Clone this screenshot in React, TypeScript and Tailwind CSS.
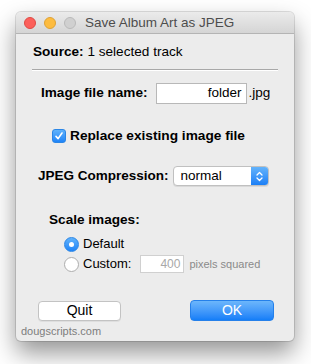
import React from "react";

const font = { fontFamily: '"Liberation Sans", Arial, sans-serif' };

export default function App() {
  return (
    <div className="w-[311px] h-[364px] bg-white pl-[16px] pt-[12px]" style={font}>
      <div className="w-[278px] h-[329px] bg-[#ececec] rounded-[5px] shadow-[0_12px_24px_rgba(0,0,0,0.42),0_0_0_1px_rgba(0,0,0,0.12)] flex flex-col overflow-hidden">
        {/* Title bar */}
        <div className="h-[22px] shrink-0 flex items-center bg-gradient-to-b from-[#ebebeb] to-[#d5d5d5] border-b border-[#b4b4b4] pl-[8px]">
          <div className="w-[12px] h-[12px] rounded-full bg-[#fc605b] border border-[#de4a44]" />
          <div className="w-[12px] h-[12px] rounded-full bg-[#fdbc40] border border-[#dea236] ml-[8px]" />
          <div className="w-[12px] h-[12px] rounded-full bg-[#d0d0d0] border border-[#b9b9b9] ml-[8px]" />
          <div className="ml-[9px] text-[13.5px] text-[#4d4d4d] leading-none">Save Album Art as JPEG</div>
        </div>

        {/* Source */}
        <div className="mt-[10px] pl-[17px] text-[13.6px] leading-[16px] text-black">
          <span className="font-bold">Source:</span> 1 selected track
        </div>

        {/* Separator */}
        <div className="mx-[16px] mt-[9px] h-[1px] bg-[#a8a8a8]" />
        <div className="mx-[16px] h-[1px] bg-white" />

        {/* Image file name */}
        <div className="mt-[12px] pl-[25px] flex items-center h-[21px]">
          <span className="font-bold text-[13.6px] text-black">Image file name:</span>
          <div className="ml-[8px] w-[91px] h-[21px] bg-white border border-[#b8b8b8] flex items-center justify-end pr-[4px] text-[13.5px] text-black">
            folder
          </div>
          <span className="ml-[2px] text-[13.5px] text-black">.jpg</span>
        </div>

        {/* Checkbox */}
        <div className="mt-[24px] pl-[36px] flex items-center h-[16px]">
          <div className="w-[14px] h-[14px] rounded-[3px] bg-gradient-to-b from-[#5fb2fb] to-[#1d84f8] border border-[#2b86e6] flex items-center justify-center">
            <svg width="10" height="10" viewBox="0 0 10 10">
              <path d="M2 5.4 L4.1 7.6 L8 2" fill="none" stroke="white" strokeWidth="1.6" strokeLinecap="round" strokeLinejoin="round" />
            </svg>
          </div>
          <span className="ml-[4px] font-bold text-[13.7px] text-black">Replace existing image file</span>
        </div>

        {/* Compression */}
        <div className="mt-[22px] pl-[22px] flex items-center h-[20px]">
          <span className="font-bold text-[13.5px] text-black">JPEG Compression:</span>
          <div className="ml-[4px] w-[96px] h-[20px] bg-white border border-[#c0c0c0] rounded-[4px] flex items-center overflow-hidden shadow-[0_1px_0_rgba(0,0,0,0.08)]">
            <span className="flex-1 pl-[7px] text-[13.5px] text-black">normal</span>
            <div className="w-[17px] h-full bg-gradient-to-b from-[#63b3fb] to-[#1a7ff6] flex items-center justify-center">
              <svg width="9" height="13" viewBox="0 0 9 13">
                <path d="M2 5 L4.5 2.5 L7 5" fill="none" stroke="white" strokeWidth="1.3" strokeLinecap="round" strokeLinejoin="round" />
                <path d="M2 8 L4.5 10.5 L7 8" fill="none" stroke="white" strokeWidth="1.3" strokeLinecap="round" strokeLinejoin="round" />
              </svg>
            </div>
          </div>
        </div>

        {/* Scale images */}
        <div className="mt-[26px] pl-[33px] h-[16px] flex items-center font-bold text-[13.6px] text-black">Scale images:</div>

        <div className="mt-[8px] pl-[48px] h-[16px] flex items-center">
          <div className="w-[15px] h-[15px] rounded-full bg-gradient-to-b from-[#5fb2fb] to-[#1d84f8] border border-[#2b86e6] flex items-center justify-center">
            <div className="w-[5px] h-[5px] rounded-full bg-white" />
          </div>
          <span className="ml-[4px] text-[13px] text-black">Default</span>
        </div>

        <div className="mt-[3px] pl-[48px] h-[18px] flex items-center">
          <div className="w-[15px] h-[15px] rounded-full bg-white border border-[#adadad]" />
          <span className="ml-[4px] text-[13px] text-black">Custom:</span>
          <div className="ml-[9px] w-[44px] h-[18px] bg-white border border-[#d0d0d0] flex items-center justify-end pr-[3px] text-[12px] text-[#a8a8a8]">
            400
          </div>
          <span className="ml-[5px] text-[11px] text-[#8a8a8a]">pixels squared</span>
        </div>

        {/* Buttons */}
        <div className="mt-[27px] pl-[22px] pr-[20px] flex items-center justify-between h-[21px]">
          <div className="w-[83px] h-[20px] bg-white border border-[#c3c3c3] rounded-[4px] flex items-center justify-center text-[14px] text-black shadow-[0_1px_0_rgba(0,0,0,0.06)]">
            Quit
          </div>
          <div className="w-[84px] h-[21px] rounded-[4px] bg-gradient-to-b from-[#6cb6fb] to-[#137ef8] border border-[#2580ea] flex items-center justify-center text-[14px] text-white">
            OK
          </div>
        </div>

        <div className="mt-[4px] pl-[5px] text-[11px] leading-[13px] text-[#7d7d7d]">dougscripts.com</div>
      </div>
    </div>
  );
}
